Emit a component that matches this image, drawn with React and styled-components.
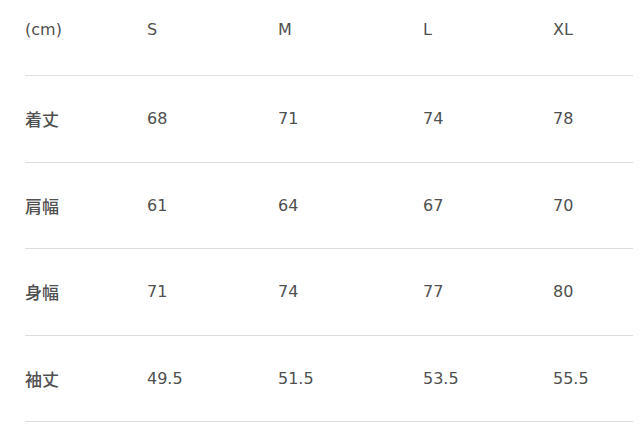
import React from "react";
import styled, { createGlobalStyle } from "styled-components";

const Global = createGlobalStyle`
  html, body { margin: 0; padding: 0; background: #fff; }
  body { font-family: "DejaVu Sans", "Noto Sans CJK JP", sans-serif; }
`;

const Table = styled.div`
  margin: 0 7px 0 25px;
  display: flex;
  flex-direction: column;
`;

const Row = styled.div`
  display: grid;
  grid-template-columns: 122px 131px 145px 130px 1fr;
  align-items: center;
  height: ${(p) => (p.$head ? "76px" : "86.5px")};
  padding-bottom: ${(p) => (p.$head ? "16px" : "0")};
  box-sizing: border-box;
  border-bottom: 1.5px solid #dedede;
`;

const Cell = styled.div`
  font-size: ${(p) => (p.$label ? "17px" : "16px")};
  font-weight: ${(p) => (p.$label ? 500 : 400)};
  color: #505050;
`;

const head = ["(cm)", "S", "M", "L", "XL"];
const rows = [
  ["着丈", "68", "71", "74", "78"],
  ["肩幅", "61", "64", "67", "70"],
  ["身幅", "71", "74", "77", "80"],
  ["袖丈", "49.5", "51.5", "53.5", "55.5"],
];

export default function App() {
  return (
    <>
      <Global />
      <Table>
        <Row $head>
          {head.map((h) => (
            <Cell key={h}>{h}</Cell>
          ))}
        </Row>
        {rows.map((r) => (
          <Row key={r[0]}>
            {r.map((c, i) => (
              <Cell key={i} $label={i === 0}>
                {c}
              </Cell>
            ))}
          </Row>
        ))}
      </Table>
    </>
  );
}
